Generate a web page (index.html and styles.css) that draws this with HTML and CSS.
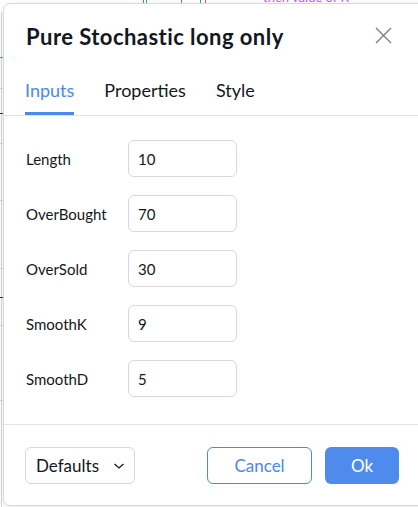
FILE: index.html
```html
<!DOCTYPE html>
<html lang="en">
<head>
<meta charset="utf-8">
<title>Pure Stochastic long only</title>
<link rel="stylesheet" href="styles.css">
</head>
<body>
<div class="chart">
  <div class="vline"></div>
  <span class="note">then value of K</span>
  <span class="tick t1"></span>
  <span class="tick t2"></span>
  <span class="tick t3"></span>
  <span class="tick t4"></span>
  <span class="tick t5"></span>
  <div class="grid">
    <span style="top:57px" class="gl green"></span>
    <span style="top:88px" class="gl"></span>
    <span style="top:113px" class="gl dark"></span>
    <span style="top:143px" class="gl"></span>
    <span style="top:200px" class="gl"></span>
    <span style="top:268px" class="gl"></span>
    <span style="top:297px" class="gl dark"></span>
    <span style="top:325px" class="gl"></span>
    <span style="top:400px" class="gl"></span>
  </div>
</div>

<div class="dialog">
  <div class="head">
    <h1 class="title">Pure Stochastic long only</h1>
    <button class="close" aria-label="Close">
      <svg width="17" height="17" viewBox="0 0 17 17"><path d="M1 1L16 16M16 1L1 16" stroke="#7b7e88" stroke-width="1.4" fill="none"/></svg>
    </button>
  </div>
  <div class="tabs">
    <div class="tab active">Inputs</div>
    <div class="tab">Properties</div>
    <div class="tab">Style</div>
  </div>
  <div class="body">
    <div class="row"><label>Length</label><div class="field">10</div></div>
    <div class="row"><label>OverBought</label><div class="field">70</div></div>
    <div class="row"><label>OverSold</label><div class="field">30</div></div>
    <div class="row"><label>SmoothK</label><div class="field">9</div></div>
    <div class="row"><label>SmoothD</label><div class="field">5</div></div>
  </div>
  <div class="foot">
    <div class="defaults">Defaults
      <svg width="12" height="8" viewBox="0 0 12 8"><path d="M1.5 2L6 6L10.5 2" stroke="#131722" stroke-width="1.3" fill="none"/></svg>
    </div>
    <div class="actions">
      <div class="btn cancel">Cancel</div>
      <div class="btn ok">Ok</div>
    </div>
  </div>
</div>
</body>
</html>
```

FILE: styles.css
```css
html, body {
  margin: 0;
  padding: 0;
  width: 418px;
  height: 507px;
  overflow: hidden;
  background: #ffffff;
  font-family: Lato, "Liberation Sans", sans-serif;
  color: #131722;
}

.chart {
  position: absolute;
  inset: 0;
}
.vline {
  position: absolute;
  left: 1px;
  top: 12px;
  bottom: 0;
  width: 1px;
  background: #d4d6dc;
}
.note {
  position: absolute;
  left: 263px;
  top: -11px;
  font-size: 13px;
  color: #b45ff0;
  white-space: nowrap;
}
.tick {
  position: absolute;
  top: 0;
  width: 1px;
  height: 4px;
}
.t1 { left: 143px; background: #ef5350; }
.t2 { left: 146px; background: #26a69a; }
.t3 { left: 181px; background: #ef5350; }
.t4 { left: 200px; background: #26a69a; }
.t5 { left: 205px; background: #ef5350; }
.gl {
  position: absolute;
  left: 0;
  width: 4px;
  height: 1px;
  background: #d4d6dc;
}
.gl.dark { background: #333; }
.gl.green { background: #3aa57a; }

.dialog {
  position: absolute;
  left: 3px;
  top: 3px;
  width: 440px;
  height: 503px;
  box-sizing: border-box;
  background: #fff;
  border: 1px solid #d6d8de;
  border-radius: 7px;
  box-shadow: 0 2px 8px rgba(0,0,0,0.08);
  display: flex;
  flex-direction: column;
}

.head {
  height: 61px;
  display: flex;
  align-items: center;
  padding: 3px 0 0 22px;
  width: 394px;
  box-sizing: border-box;
  justify-content: space-between;
}
.title {
  margin: 0;
  font-size: 22px;
  font-weight: 700;
  letter-spacing: 0.45px;
}
.close {
  border: 0;
  background: none;
  padding: 0;
  width: 17px;
  height: 17px;
  display: block;
  margin-right: 6px;
  margin-top: -2px;
}
.close svg { display: block; }

.tabs {
  height: 50px;
  display: flex;
  gap: 30px;
  padding-left: 21px;
  border-bottom: 1px solid #e0e3eb;
}
.tab {
  font-size: 18px;
  display: flex;
  align-items: center;
  padding-top: 2px;
  box-sizing: border-box;
  border-bottom: 3px solid transparent;
}
.tab.active {
  color: #4a88ec;
  border-bottom-color: #4a88ec;
}

.body {
  padding: 24px 0 27px 22px;
  display: flex;
  flex-direction: column;
  gap: 18px;
  border-bottom: 1px solid #e0e3eb;
}
.row {
  display: grid;
  grid-template-columns: 102px 109px;
  align-items: center;
  height: 37px;
}
.row label {
  font-size: 15px;
}
.field {
  height: 37px;
  box-sizing: border-box;
  border: 1px solid #d6d8de;
  border-radius: 6px;
  padding-left: 9px;
  display: flex;
  align-items: center;
  font-size: 15px;
}

.foot {
  display: flex;
  align-items: center;
  justify-content: space-between;
  padding: 22px 0 0 21px;
  width: 395px;
  box-sizing: border-box;
}
.defaults {
  width: 110px;
  height: 37px;
  box-sizing: border-box;
  border: 1px solid #d6d8de;
  border-radius: 6px;
  display: flex;
  align-items: center;
  justify-content: space-between;
  padding: 0 9px 0 10px;
  font-size: 17px;
}
.defaults svg { display: block; }
.actions {
  display: flex;
  gap: 13px;
}
.btn {
  height: 37px;
  box-sizing: border-box;
  border-radius: 6px;
  display: flex;
  align-items: center;
  justify-content: center;
  font-size: 17px;
}
.cancel {
  width: 105px;
  border: 1px solid #4a88ec;
  color: #4a88ec;
}
.ok {
  width: 74px;
  background: #4f8bed;
  color: #fff;
}
```
